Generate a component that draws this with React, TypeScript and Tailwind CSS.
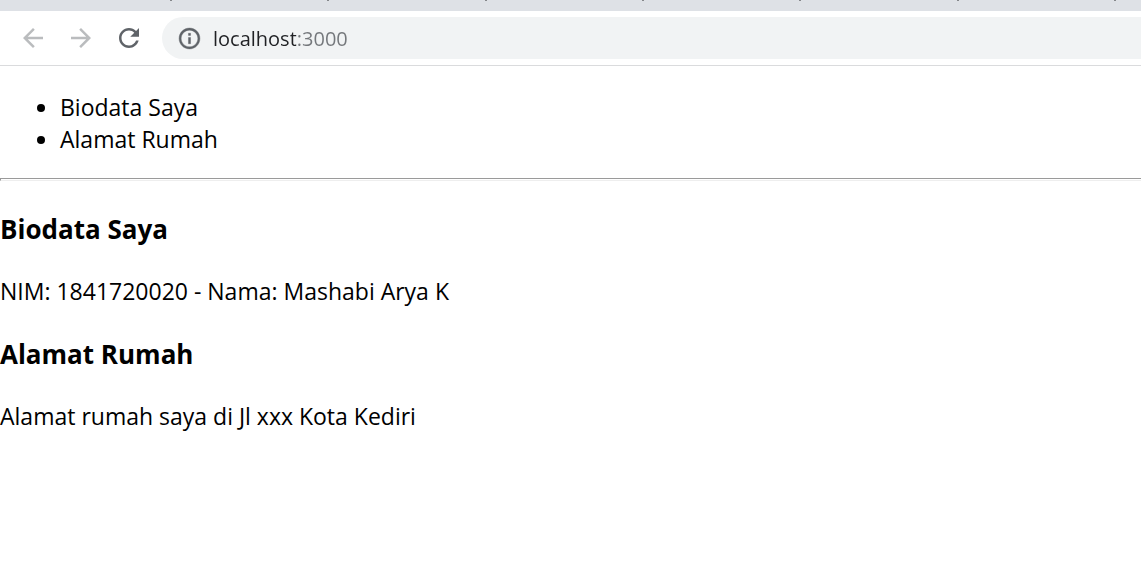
const separators = ['a', 'b', 'c', 'd', 'e', 'f', 'g'];

const icons = {
  back: 'M20 11H7.83l5.59-5.59L12 4l-8 8 8 8 1.41-1.41L7.83 13H20v-2z',
  forward: 'M12 4l-1.41 1.41L16.17 11H4v2h12.17l-5.58 5.59L12 20l8-8z',
  reload:
    'M17.65 6.35C16.2 4.9 14.21 4 12 4c-4.42 0-7.99 3.58-7.99 8s3.57 8 7.99 8c3.73 0 6.84-2.55 7.73-6h-2.08c-.82 2.33-3.04 4-5.65 4-3.31 0-6-2.69-6-6s2.69-6 6-6c1.66 0 3.14.69 4.22 1.78L13 11h7V4l-2.35 2.35z',
  info: 'M11 7h2v2h-2zm0 4h2v6h-2zm1-9C6.48 2 2 6.48 2 12s4.48 10 10 10 10-4.48 10-10S17.52 2 12 2zm0 18c-4.41 0-8-3.59-8-8s3.59-8 8-8 8 3.59 8 8-3.59 8-8 8z',
};

function Icon({ path, className }: { path: string; className: string }) {
  return (
    <svg viewBox="0 0 24 24" fill="currentColor" aria-hidden="true" className={className}>
      <path d={path} />
    </svg>
  );
}

function BrowserBar() {
  return (
    <header>
      <div className="flex h-[11px] items-start justify-between bg-[#dee1e6] pr-[25px] pl-[170px]">
        {separators.map((key) => (
          <span key={key} className="h-px w-0.5 bg-[#85878b]" />
        ))}
      </div>
      <div className="flex items-center border-b border-[#dadbdd] bg-white py-1.5 pl-[18px]">
        <nav className="flex gap-[18px] pr-[18px]">
          <button type="button" aria-label="Back" disabled className="text-[#babcbe]">
            <Icon path={icons.back} className="size-[30px]" />
          </button>
          <button type="button" aria-label="Forward" disabled className="text-[#babcbe]">
            <Icon path={icons.forward} className="size-[30px]" />
          </button>
          <button type="button" aria-label="Reload" className="text-[#5f6368]">
            <Icon path={icons.reload} className="size-[30px]" />
          </button>
        </nav>
        <div className="flex h-[42px] flex-1 items-center gap-[11px] rounded-l-full bg-[#f1f3f4] pl-[15px]">
          <button type="button" aria-label="Site information" className="text-[#5f6368]">
            <Icon path={icons.info} className="size-[25px] stroke-current stroke-[0.4]" />
          </button>
          <input
            type="text"
            aria-label="Address"
            defaultValue="localhost:3000"
            className="min-w-0 flex-1 bg-[linear-gradient(to_right,#202124_83px,#74777b_83px)] bg-clip-text pt-0.5 text-[20px] leading-7 text-transparent outline-none"
          />
        </div>
      </div>
    </header>
  );
}

export default function App() {
  return (
    <div className="min-h-screen bg-white font-['Open_Sans',sans-serif] text-black">
      <BrowserBar />
      <main className="pt-[25px] text-[23px] leading-8">
        <ul className="list-disc pl-[60px]">
          <li>Biodata Saya</li>
          <li>Alamat Rumah</li>
        </ul>
        <hr className="mt-[23px] h-[3px] border-t border-b border-l border-t-[#9a9a9a] border-b-[#eeeeee] border-l-[#9a9a9a]" />
        <section className="pt-[30px]">
          <h3 className="text-[26px] leading-9 font-bold">Biodata Saya</h3>
          <p className="pt-7">NIM: 1841720020 - Nama: Mashabi Arya K</p>
        </section>
        <section className="pt-[29px]">
          <h3 className="text-[26px] leading-9 font-bold">Alamat Rumah</h3>
          <p className="pt-7">Alamat rumah saya di Jl xxx Kota Kediri</p>
        </section>
      </main>
    </div>
  );
}
